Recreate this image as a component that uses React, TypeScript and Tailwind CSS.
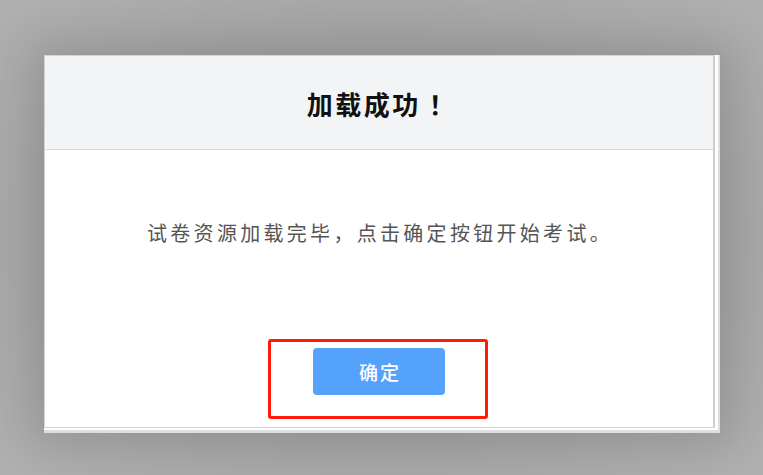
import React from "react";

export default function App() {
  return (
    <div
      className="relative w-[763px] h-[475px] overflow-hidden bg-[radial-gradient(ellipse_at_center,#8f8f8f_0%,#a3a3a3_55%,#b0b0b0_100%)] pl-[44px] pt-[55px]"
      style={{ fontFamily: '"Noto Sans CJK SC", "Noto Sans", sans-serif' }}
    >
      <div className="w-[676px] h-[378px] bg-white border-r-2 border-b-[3px] border-[#dedede] shadow-[0_0_40px_12px_rgba(0,0,0,0.12)]">
        <div className="w-[671px] h-[373px] border border-[#d4d4d4] border-r-2 border-r-[#cfcfcf] bg-white flex flex-col">
          <div className="h-[94px] bg-[#f3f4f6] border-b border-[#dcdcdc] flex items-center justify-center pt-[2px]">
            <span className="text-[26px] font-bold text-[#111] tracking-[2.5px] pl-[6px]">
              加载成功<span className="ml-[8px]">！</span>
            </span>
          </div>
          <div className="flex-1 flex flex-col items-center">
            <p className="mt-[71px] text-[20px] text-[#555] tracking-[3.3px] leading-[24px] pl-[2px]">
              试卷资源加载完毕，点击确定按钮开始考试。
            </p>
            <button className="mt-[103px] w-[132px] h-[47px] rounded-[4px] bg-[#55a2fc] text-white text-[19px] font-medium tracking-[2px] pl-[2px] leading-none">
              确定
            </button>
          </div>
        </div>
      </div>
      <div className="absolute left-[268px] top-[339px] w-[220px] h-[80px] border-[3px] border-[#ff1a0a] rounded-[3px]" />
    </div>
  );
}
